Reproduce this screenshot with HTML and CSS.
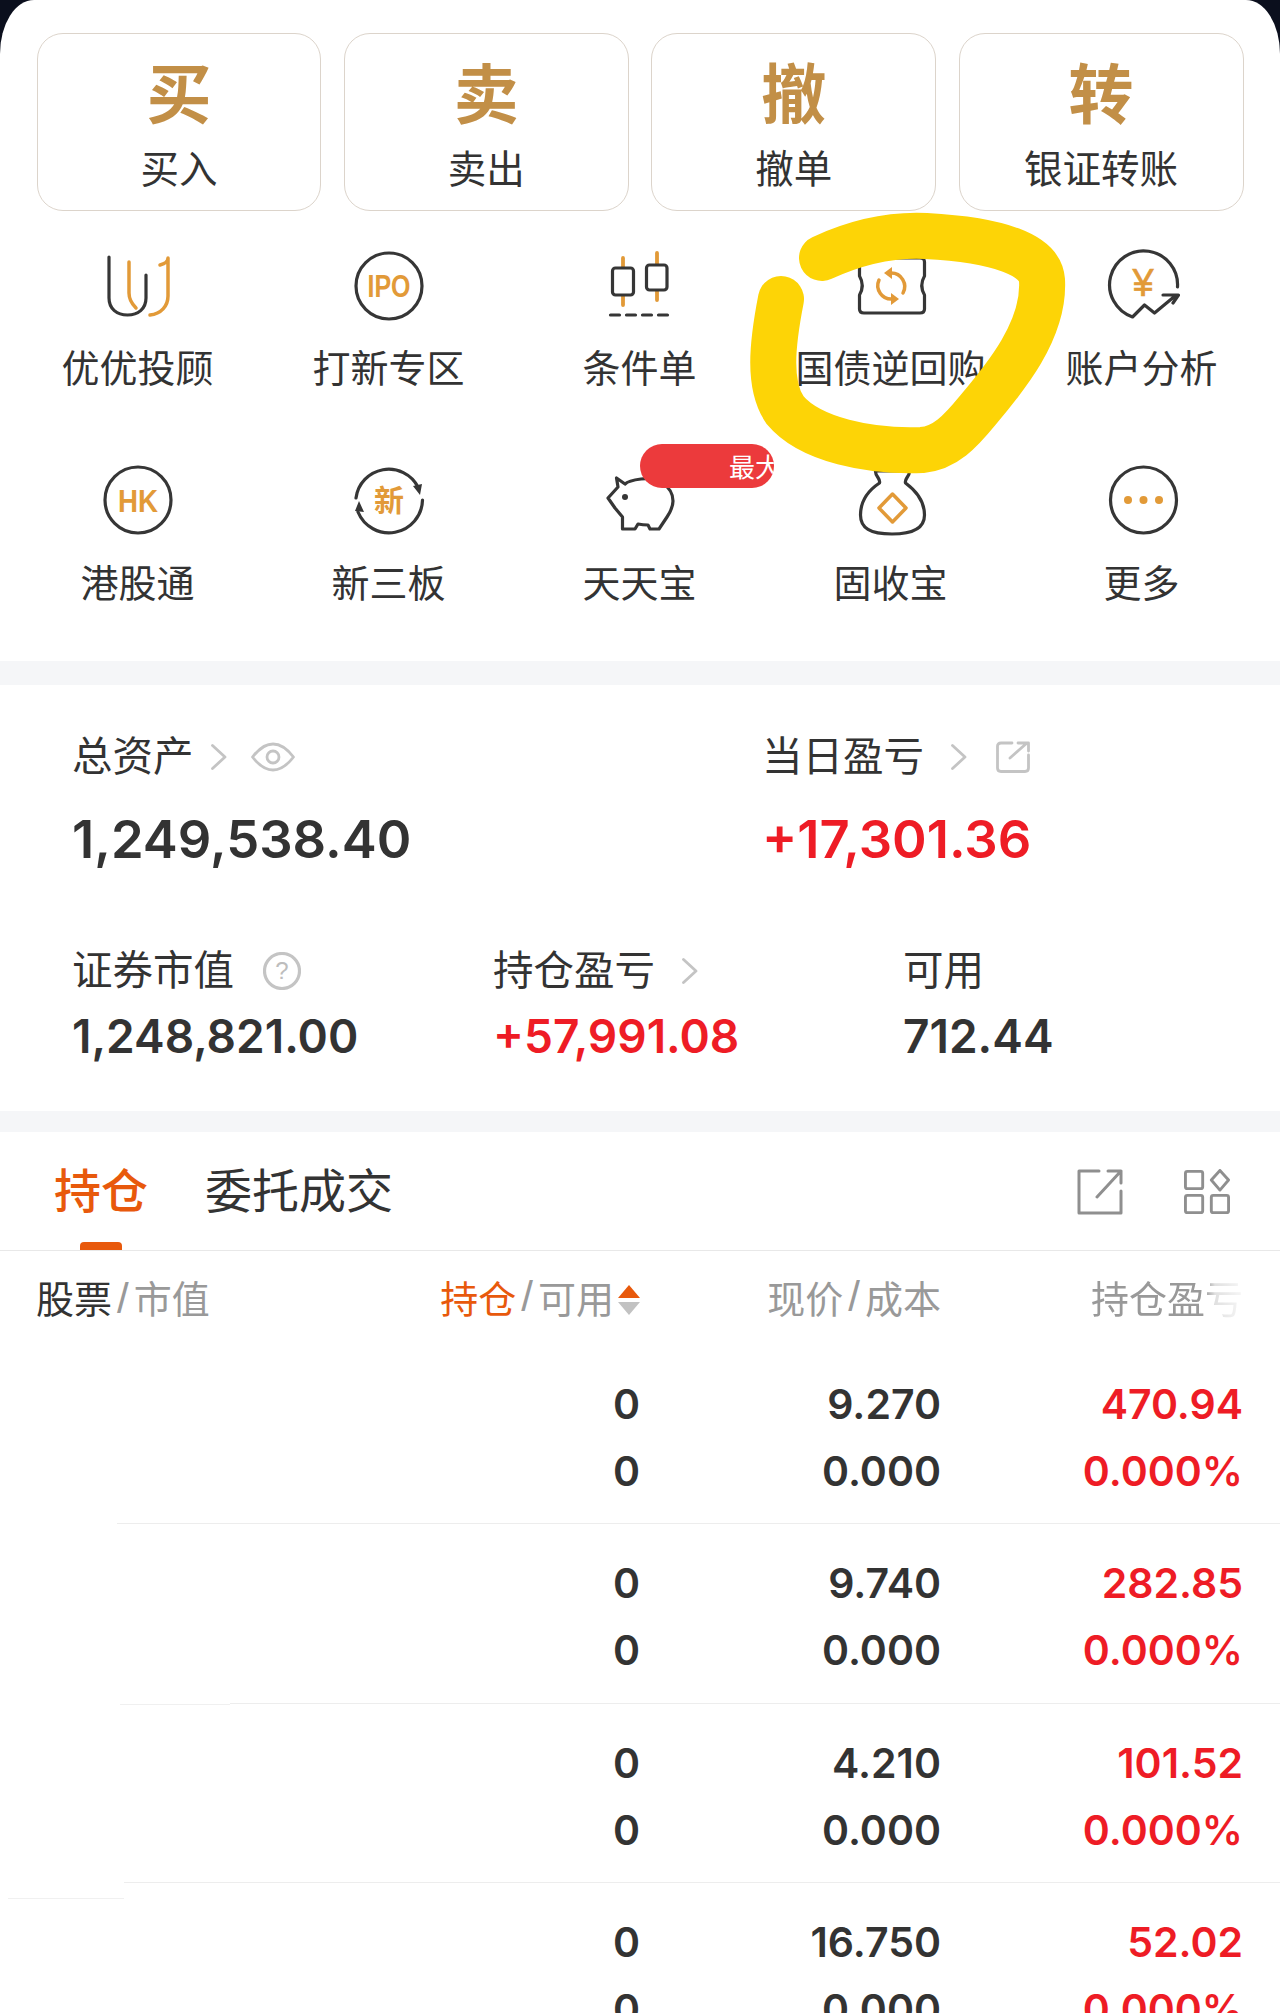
FILE: index.html
```html
<!DOCTYPE html>
<html lang="zh-CN">
<head>
<meta charset="utf-8">
<title>交易</title>
<link rel="stylesheet" href="styles.css">
</head>
<body>
<main class="panel">
  <section class="actions">
    <a class="action"><span class="action-mark">买</span><span class="action-label">买入</span></a>
    <a class="action"><span class="action-mark">卖</span><span class="action-label">卖出</span></a>
    <a class="action"><span class="action-mark">撤</span><span class="action-label">撤单</span></a>
    <a class="action"><span class="action-mark">转</span><span class="action-label">银证转账</span></a>
  </section>

  <section class="services">
    <a class="service">
      <svg class="icon" viewBox="0 0 70 70"><path class="ink" d="M6 7V48C6 59 14 65 24.500 65C35 65 43 59 43 48V25"/><path class="gold" d="M26 12V43C26 50 29 54 33 58"/><path class="gold" d="M57 15C61 14 65 12 65 8V46C65 56 58 64 47 65"/></svg>
      <span class="service-label">优优投顾</span>
    </a>
    <a class="service">
      <svg class="icon" viewBox="0 0 70 70"><circle class="ink" cx="35" cy="36" r="33"/><text class="glyph" x="13.500" y="47" textLength="43" lengthAdjust="spacingAndGlyphs">IPO</text></svg>
      <span class="service-label">打新专区</span>
    </a>
    <a class="service">
      <svg class="icon" viewBox="0 0 70 70"><path class="gold wide" d="M18 8V55M52 3V50"/><rect class="ink paper" x="7.500" y="18" width="21" height="27" rx="3"/><rect class="ink paper" x="41.500" y="15" width="20.500" height="25" rx="3"/><path class="ink" stroke-dasharray="9 7" d="M5.500 65H65"/></svg>
      <span class="service-label">条件单</span>
    </a>
    <a class="service">
      <svg class="icon" viewBox="0 0 70 70"><path class="ink" d="M8 8H64Q68.500 8 68.500 12V26Q63 35.500 68.500 45V59Q68.500 63 64 63H8Q3.500 63 3.500 59V45Q9 35.500 3.500 26V12Q3.500 8 8 8Z"/><path class="gold" d="M47 43A13.500 13.500 0 0 0 35 23M23 30A13.500 13.500 0 0 0 36 49"/><path class="gold-fill" d="M36 17L28 23L36 29ZM35 43L43 49L35 55Z"/></svg>
      <span class="service-label">国债逆回购</span>
    </a>
    <a class="service">
      <svg class="icon" viewBox="0 0 70 70"><path class="ink" d="M70.500 37A34 34 0 1 0 25.500 67L37.500 55L47.500 63L68 46M56 45H71.500L66 53"/><text class="glyph yen" x="36" y="46">¥</text></svg>
      <span class="service-label">账户分析</span>
    </a>
    <a class="service">
      <svg class="icon" viewBox="0 0 70 70"><circle class="ink" cx="35" cy="35" r="33"/><text class="glyph" x="15" y="47" textLength="40" lengthAdjust="spacingAndGlyphs">HK</text></svg>
      <span class="service-label">港股通</span>
    </a>
    <a class="service">
      <svg class="icon" viewBox="0 0 70 70"><path class="ink" d="M2 33A33 33 0 0 1 64 22M68.500 35A33.500 33.500 0 0 1 4 47"/><path class="ink-fill" d="M59 21L68 19L66 30ZM1 46L10 47L5 36Z"/><text class="glyph cn" x="35" y="46">新</text></svg>
      <span class="service-label">新三板</span>
    </a>
    <a class="service">
      <svg class="icon" viewBox="0 0 70 70"><path class="ink" d="M11.500 13L13 22L3 33L10 43L17.500 52V64H30L33 59C38 60 42 60 43 60L45 64H54L62 52C66 46 68 42 68 36C68 20 50 12 36 14C28 15 22 17 20 19Z"/><circle class="ink-fill" cx="20" cy="32" r="3"/></svg>
      <span class="service-label">天天宝</span>
      <span class="promo">最大</span>
    </a>
    <a class="service">
      <svg class="icon" viewBox="0 0 70 70"><path class="ink" d="M19.500 6C19 11 25 14 23.500 18C13 25 4.500 35 4.500 50C4.500 63 14 69 36 69C58 69 68.500 63 68.500 50C68.500 35 59 25 49.500 18C48 14 54 11 53.500 6Z"/><path class="gold" d="M36.500 29L50 43L36.500 57L23 43Z"/></svg>
      <span class="service-label">固收宝</span>
    </a>
    <a class="service">
      <svg class="icon" viewBox="0 0 70 70"><circle class="ink" cx="36.500" cy="35" r="33"/><circle class="gold-fill" cx="21" cy="35" r="4"/><circle class="gold-fill" cx="36.500" cy="35" r="4"/><circle class="gold-fill" cx="52" cy="35" r="4"/></svg>
      <span class="service-label">更多</span>
    </a>
  </section>

  <section class="assets">
    <div class="assets-top">
      <div class="stat">
        <div class="stat-head">
          <span>总资产</span>
          <svg class="chevron" viewBox="0 0 16 26"><path d="M1.500 1.500L14 13L1.500 24.500"/></svg>
          <svg class="eye" viewBox="0 0 44 30"><path d="M1.500 15C10 4 16 2 22 2S34 4 42.500 15C34 26 28 28 22 28S10 26 1.500 15Z"/><circle cx="22" cy="15" r="6"/></svg>
        </div>
        <div class="stat-big">1,249,538.40</div>
      </div>
      <div class="stat">
        <div class="stat-head">
          <span>当日盈亏</span>
          <svg class="chevron second" viewBox="0 0 16 26"><path d="M1.500 1.500L14 13L1.500 24.500"/></svg>
          <svg class="share" viewBox="0 0 34 32"><path d="M16 2H5Q1.500 2 1.500 5V27Q1.500 30.500 5 30.500H29Q32.500 30.500 32.500 27V14M14 17L31 2M22 2H32.500V10"/></svg>
        </div>
        <div class="stat-big rise">+17,301.36</div>
      </div>
    </div>
    <div class="assets-bottom">
      <div class="stat">
        <div class="stat-head">
          <span>证券市值</span>
          <svg class="help" viewBox="0 0 38 38"><circle cx="19" cy="19" r="17.500"/><text x="19" y="27">?</text></svg>
        </div>
        <div class="stat-mid">1,248,821.00</div>
      </div>
      <div class="stat">
        <div class="stat-head">
          <span>持仓盈亏</span>
          <svg class="chevron second" viewBox="0 0 16 26"><path d="M1.500 1.500L14 13L1.500 24.500"/></svg>
        </div>
        <div class="stat-mid rise">+57,991.08</div>
      </div>
      <div class="stat">
        <div class="stat-head"><span>可用</span></div>
        <div class="stat-mid">712.44</div>
      </div>
    </div>
  </section>

  <section class="holdings">
    <nav class="tabs">
      <a class="tab tab-on">持仓</a>
      <a class="tab">委托成交</a>
      <div class="tab-tools">
        <svg class="tool" viewBox="0 0 46 46"><path d="M22 2H2V44H44V22M44 14V2H31M44 2L20 28"/></svg>
        <svg class="tool" viewBox="0 0 48 46"><rect x="1.500" y="1.500" width="18" height="18" rx="2"/><rect x="1.500" y="26.500" width="18" height="18" rx="2"/><rect x="28.500" y="26.500" width="18" height="18" rx="2"/><path d="M37.500 0.500L46.500 10.500L37.500 21L28.500 10.500Z"/></svg>
      </div>
    </nav>

    <div class="table-head">
      <div class="cell-left"><b class="strong">股票</b><i>/</i>市值</div>
      <div class="cell-right"><b class="active">持仓</b><i>/</i>可用<span class="sort"><span class="sort-up"></span><span class="sort-down"></span></span></div>
      <div class="cell-right">现价<i>/</i>成本</div>
      <div class="cell-right cell-fade">持仓盈亏</div>
    </div>

    <div class="row">
      <div></div>
      <div class="num">0<br>0</div>
      <div class="num">9.270<br>0.000</div>
      <div class="num rise">470.94<br>0.000%</div>
    </div>
    <div class="rule rule-a"></div>
    <div class="row">
      <div></div>
      <div class="num">0<br>0</div>
      <div class="num">9.740<br>0.000</div>
      <div class="num rise">282.85<br>0.000%</div>
    </div>
    <div class="rule rule-b"><span class="stub-b"></span></div>
    <div class="row">
      <div></div>
      <div class="num">0<br>0</div>
      <div class="num">4.210<br>0.000</div>
      <div class="num rise">101.52<br>0.000%</div>
    </div>
    <div class="rule rule-c"><span class="stub-c"></span></div>
    <div class="row">
      <div></div>
      <div class="num">0<br>0</div>
      <div class="num">16.750<br>0.000</div>
      <div class="num rise">52.02<br>0.000%</div>
    </div>
  </section>

  <!-- hand-drawn highlighter stroke on top of the page -->
  <svg class="marker" viewBox="0 0 1280 2013"><path d="M781 299C772 345 768 385 785 410C810 440 870 452 922 450C945 448 960 432 978 410C1005 378 1045 330 1042 280C1040 255 1000 240 926 236C885 234 850 245 822 258"/></svg>
</main>
</body>
</html>
```

FILE: styles.css
```css
* {
  box-sizing: border-box;
}

html,
body {
  margin: 0;
  height: 2013px;
  overflow: hidden;
  background: #0b0f1d;
}

body {
  font-family: "Noto Sans CJK SC", "Liberation Sans", sans-serif;
  color: #333;
}

.panel {
  position: relative;
  height: 2013px;
  overflow: hidden;
  background: #fff;
  border-radius: 34px 34px 0 0 / 54px 54px 0 0;
}

/* trade buttons */
.actions {
  display: grid;
  grid-template-columns: repeat(4, 1fr);
  gap: 22.5px;
  padding: 33px 36.5px 0;
}

.action {
  height: 178px;
  display: flex;
  flex-direction: column;
  align-items: center;
  border: 1.5px solid #dcd4cb;
  border-radius: 26px;
}

.action-mark {
  margin-top: 13px;
  font-size: 65px;
  line-height: 86px;
  font-weight: 700;
  color: #c28f47;
}

.action-label {
  margin-top: 9px;
  font-size: 38.5px;
  line-height: 48px;
}

/* service shortcuts */
.services {
  display: grid;
  grid-template-columns: repeat(5, 251px);
  row-gap: 74px;
  padding: 39px 12px 55px;
  border-bottom: 24px solid #f5f6f8;
}

.service {
  position: relative;
  display: flex;
  flex-direction: column;
  align-items: center;
  height: 141px;
}

.icon {
  display: block;
  width: 70px;
  height: 70px;
  margin-bottom: 23px;
  overflow: visible;
}

.service-label {
  font-size: 38px;
  line-height: 46px;
  white-space: nowrap;
}

.ink,
.gold {
  fill: none;
  stroke-linecap: round;
  stroke-linejoin: round;
}

.ink {
  stroke: #363636;
  stroke-width: 3.2;
}

.gold {
  stroke: #e29a38;
  stroke-width: 3.5;
}

.wide {
  stroke-width: 3.8;
}

.paper {
  fill: #fff;
}

.gold-fill {
  fill: #e29a38;
}

.ink-fill {
  fill: #363636;
}

.glyph {
  font-family: "Liberation Sans", sans-serif;
  font-size: 31px;
  font-weight: 700;
  fill: #e29a38;
}

.yen {
  font-size: 38px;
  font-weight: 400;
  text-anchor: middle;
  stroke: #e29a38;
  stroke-width: 0.6;
}

.cn {
  font-family: "Noto Sans CJK SC", sans-serif;
  font-size: 30px;
  text-anchor: middle;
}

.promo {
  position: absolute;
  left: 126px;
  top: -21px;
  z-index: 1;
  width: 134px;
  height: 44px;
  overflow: hidden;
  padding-left: 89px;
  border-radius: 22px;
  background: #ec3a3c;
  color: #fff;
  font-size: 26px;
  line-height: 44px;
  white-space: nowrap;
}

/* account summary */
.assets {
  height: 447px;
  padding: 48px 0 0 72px;
  border-bottom: 21px solid #f5f6f8;
}

.assets-top {
  display: grid;
  grid-template-columns: 690px 1fr;
}

.assets-bottom {
  display: grid;
  grid-template-columns: 421px 410px 1fr;
  margin-top: 76px;
}

.stat-head {
  display: flex;
  align-items: center;
  height: 48px;
  font-size: 40.5px;
}

.stat-head span {
  margin-bottom: 7px;
}

.stat-big,
.stat-mid,
.num {
  font-family: Inter, "Liberation Sans", sans-serif;
  font-weight: 600;
}

.stat-big {
  margin-top: 26px;
  font-size: 52.5px;
  line-height: 64px;
}

.stat-mid {
  margin-top: 13px;
  font-size: 46px;
  line-height: 56px;
}

.rise {
  color: #ee1c25;
}

.chevron,
.eye,
.share,
.help {
  fill: none;
  stroke: #c4c4c4;
  stroke-width: 2.8;
  stroke-linecap: round;
  stroke-linejoin: round;
}

.chevron {
  width: 16px;
  height: 26px;
  margin-left: 17px;
}

.chevron.second {
  margin-left: 27px;
}

.eye {
  width: 44px;
  height: 30px;
  margin-left: 24px;
}

.share {
  width: 34px;
  height: 32px;
  margin-left: 29px;
}

.help {
  width: 38px;
  height: 38px;
  margin-left: 29px;
  stroke-width: 3.2;
}

.help text {
  fill: #bdbdbd;
  stroke: none;
  font-family: "Liberation Sans", sans-serif;
  font-size: 24px;
  text-anchor: middle;
}

/* positions */
.tabs {
  display: flex;
  align-items: flex-start;
  height: 119px;
  padding: 28px 50px 0 54px;
  border-bottom: 1px solid #e8e8e8;
}

.tab {
  position: relative;
  margin-right: 57px;
  font-size: 47px;
  line-height: 56px;
}

.tab-on {
  color: #e8590c;
  font-weight: 500;
}

.tab-on::after {
  content: "";
  position: absolute;
  left: 26px;
  top: 82px;
  width: 42px;
  height: 8px;
  border-radius: 4px 4px 0 0;
  background: #e8590c;
}

.tab-tools {
  display: flex;
  gap: 61px;
  margin-left: auto;
  padding-top: 9px;
}

.tool {
  width: 46px;
  height: 46px;
  fill: none;
  stroke: #8f8f8f;
  stroke-width: 3;
  stroke-linejoin: round;
  stroke-linecap: round;
}

.table-head,
.row {
  display: grid;
  grid-template-columns: 304px 300px 301px 1fr;
  padding: 0 37px 0 36px;
}

.table-head {
  height: 48px;
  margin: 22px 0 23.5px;
  font-size: 38px;
  line-height: 48px;
  color: #999;
}

.table-head i {
  margin: 0 5px;
  font-family: "Liberation Sans", sans-serif;
  font-size: 42px;
  font-style: normal;
}

.table-head b {
  font-weight: 400;
}

.strong {
  color: #333;
}

.active {
  color: #e8590c;
}

.cell-left {
  white-space: nowrap;
}

.cell-right {
  display: flex;
  justify-content: flex-end;
  white-space: nowrap;
}

.cell-fade {
  -webkit-mask-image: linear-gradient(to left, rgba(0, 0, 0, 0.08), rgba(0, 0, 0, 0.3) 28px, #000 38px);
  mask-image: linear-gradient(to left, rgba(0, 0, 0, 0.08), rgba(0, 0, 0, 0.3) 28px, #000 38px);
}

.sort {
  display: flex;
  flex-direction: column;
  justify-content: center;
  gap: 4px;
  margin-left: 4px;
  padding-top: 3px;
}

.sort-up,
.sort-down {
  width: 0;
  height: 0;
  border-left: 11px solid transparent;
  border-right: 11px solid transparent;
}

.sort-up {
  border-bottom: 13px solid #e8590c;
}

.sort-down {
  border-top: 13px solid #c2c2c2;
}

.row {
  height: 178.5px;
  padding-top: 26px;
}

.num {
  font-size: 41px;
  line-height: 67px;
  text-align: right;
}

.rule {
  position: relative;
  height: 0;
  border-top: 1px solid #ededed;
}

.rule-a {
  margin-left: 117px;
}

.rule-b {
  margin-left: 230px;
}

.rule-c {
  margin-left: 124px;
}

.stub-b,
.stub-c {
  position: absolute;
  height: 1px;
  background: #f0f0f0;
}

.stub-b {
  left: -110px;
  top: 0;
  width: 110px;
}

.stub-c {
  left: -116px;
  top: 15px;
  width: 116px;
}

.marker {
  position: absolute;
  left: 0;
  top: 0;
  z-index: 2;
  width: 1280px;
  height: 2013px;
  pointer-events: none;
  fill: none;
  stroke: #fdd406;
  stroke-width: 46;
  stroke-linecap: round;
  stroke-linejoin: round;
}
```
